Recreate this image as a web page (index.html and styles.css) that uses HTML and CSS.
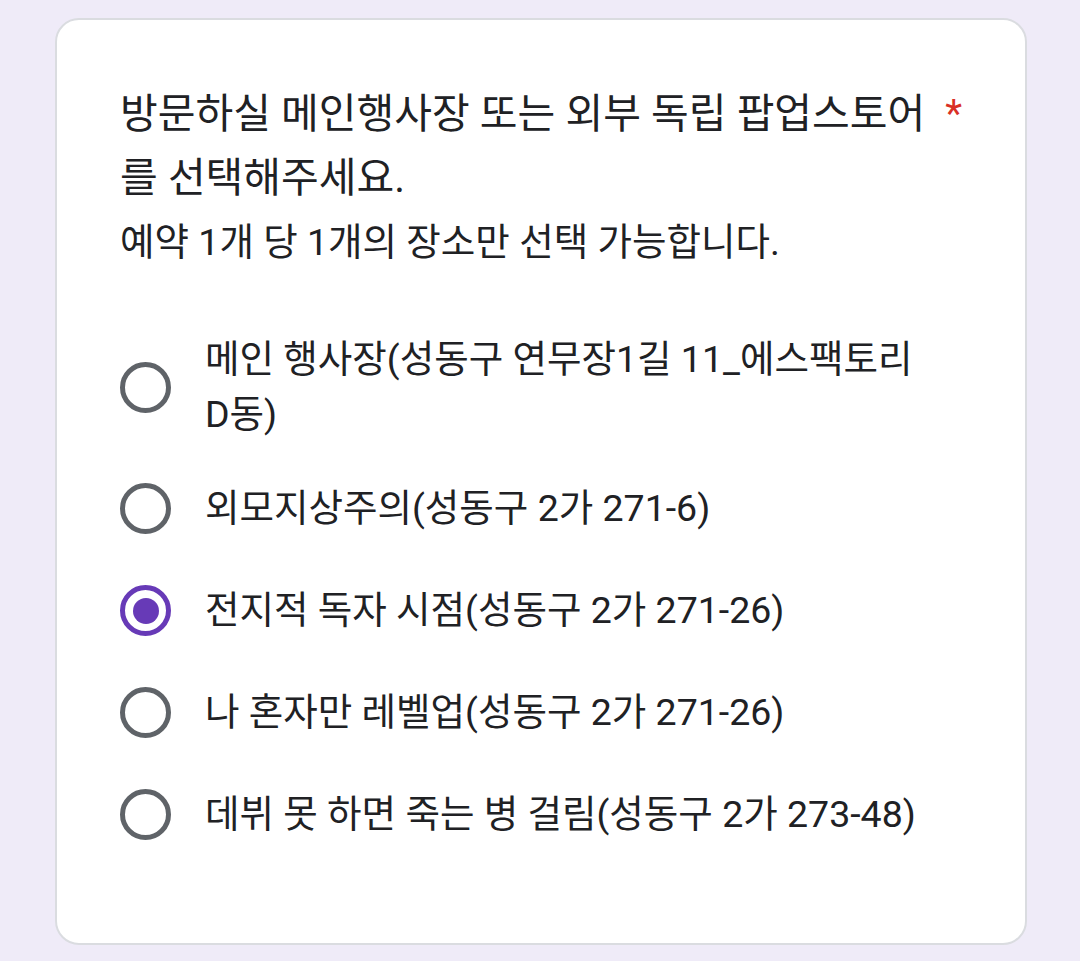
FILE: index.html
```html
<!DOCTYPE html>
<html lang="ko">
<head>
  <meta charset="UTF-8" />
  <meta name="viewport" content="width=device-width, initial-scale=1.0" />
  <title>장소 선택</title>
  <link rel="stylesheet" href="styles.css">
</head>
<body>
  <div class="card">
    <div class="question">
      <div class="title">방문하실 메인행사장 또는 외부 독립 팝업스토어를 선택해주세요.</div>
      <span class="required">*</span>
    </div>
    <div class="desc">예약 1개 당 1개의 장소만 선택 가능합니다.</div>

    <div class="options">
      <label class="option">
        <span class="radio"></span>
        <span class="label-text">메인 행사장(성동구 연무장1길 11_에스팩토리 D동)</span>
      </label>
      <label class="option">
        <span class="radio"></span>
        <span class="label-text">외모지상주의(성동구 2가 271-6)</span>
      </label>
      <label class="option">
        <span class="radio checked"></span>
        <span class="label-text">전지적 독자 시점(성동구 2가 271-26)</span>
      </label>
      <label class="option">
        <span class="radio"></span>
        <span class="label-text">나 혼자만 레벨업(성동구 2가 271-26)</span>
      </label>
      <label class="option">
        <span class="radio"></span>
        <span class="label-text">데뷔 못 하면 죽는 병 걸림(성동구 2가 273-48)</span>
      </label>
    </div>
  </div>
</body>
</html>
```

FILE: styles.css
```css
body {
  margin: 0;
  background: #efebf8;
  font-family: Roboto, "Noto Sans CJK KR", sans-serif;
  color: #202124;
}
.card {
  margin: 18px 0 0 55px;
  width: 972px;
  height: 927px;
  box-sizing: border-box;
  background: white;
  border: 2px solid #dadce0;
  border-radius: 24px;
  padding: 62px 63px 0 63px;
}
.question {
  display: flex;
  align-items: flex-start;
}
.title {
  flex: 1;
  font-size: 41px;
  line-height: 64px;
  padding-right: 14px;
}
.required {
  color: #d93025;
  font-size: 39px;
  line-height: 64px;
}
.desc {
  font-size: 37.5px;
  line-height: 64px;
}
.options {
  margin-top: 58px;
  display: flex;
  flex-direction: column;
  gap: 31px;
}
.option {
  display: flex;
  align-items: center;
  min-height: 71px;
}
.radio {
  flex: none;
  width: 51px;
  height: 51px;
  box-sizing: border-box;
  border: 5px solid #5f6368;
  border-radius: 50%;
  margin-right: 34px;
  display: flex;
  align-items: center;
  justify-content: center;
}
.radio.checked {
  border-color: #673ab7;
}
.radio.checked::after {
  content: "";
  width: 26px;
  height: 26px;
  border-radius: 50%;
  background: #673ab7;
}
.label-text {
  font-size: 37.5px;
  line-height: 55px;
  word-break: keep-all;
}
```
